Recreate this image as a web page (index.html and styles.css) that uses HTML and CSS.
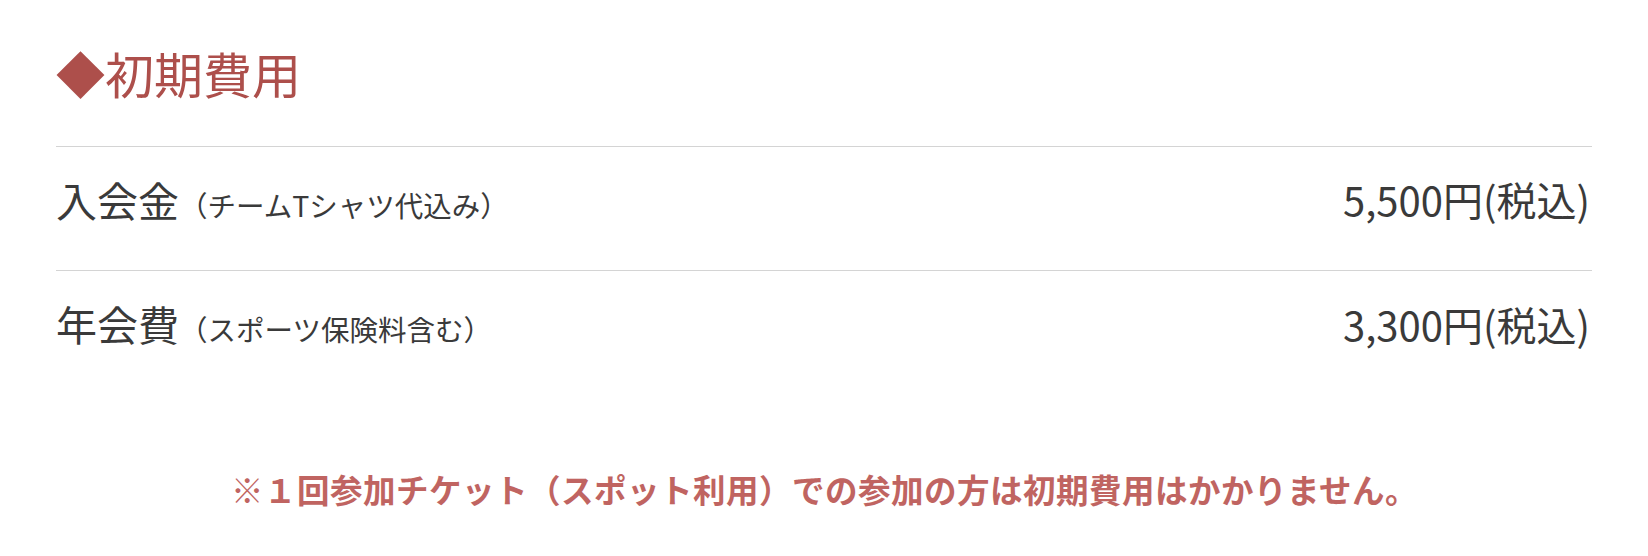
FILE: index.html
```html
<!DOCTYPE html>
<html lang="ja">
  <head>
    <meta charset="UTF-8" />
    <meta name="viewport" content="width=device-width, initial-scale=1.0" />
    <title>初期費用</title>
    <link rel="stylesheet" href="styles.css">
  </head>
  <body>
    <div class="container">
      <h2 class="fee-title">◆初期費用</h2>

      <div class="fee-list">
        <div class="fee-row">
          <div class="fee-name">
            入会金<span class="fee-note">（チームTシャツ代込み）</span>
          </div>
          <div class="fee-price">5,500円(税込)</div>
        </div>
        <div class="fee-row">
          <div class="fee-name">
            年会費<span class="fee-note">（スポーツ保険料含む）</span>
          </div>
          <div class="fee-price">3,300円(税込)</div>
        </div>
      </div>

      <p class="fee-caution">※１回参加チケット（スポット利用）での参加の方は初期費用はかかりません。</p>
    </div>
  </body>
</html>
```

FILE: styles.css
```css
html {
  background: #ffffff;
}
body {
  margin: 0;
  font-family: "Noto Sans CJK JP", "Noto Sans", sans-serif;
  color: #3a3a3a;
}
.container {
  padding: 36px 56px 0;
}
.fee-title {
  margin: 0;
  font-size: 49px;
  font-weight: 400;
  line-height: 1.5;
  color: #ad4f4b;
}
.fee-list {
  margin-top: 36px;
  border-top: 1px solid #d4d4d4;
}
.fee-row {
  display: flex;
  justify-content: space-between;
  align-items: center;
  padding: 22px 0 40px;
  font-size: 40px;
  line-height: 1.5;
}
.fee-row + .fee-row {
  border-top: 1px solid #d4d4d4;
}
.fee-name {
  font-size: 41px;
}
.fee-note {
  font-size: 28.5px;
}
.fee-price {
  padding-right: 2px;
}
.fee-caution {
  margin: 70px 0 0 175px;
  font-size: 32.5px;
  font-weight: 700;
  line-height: 1.5;
  letter-spacing: 0.5px;
  color: #c06461;
}
```
